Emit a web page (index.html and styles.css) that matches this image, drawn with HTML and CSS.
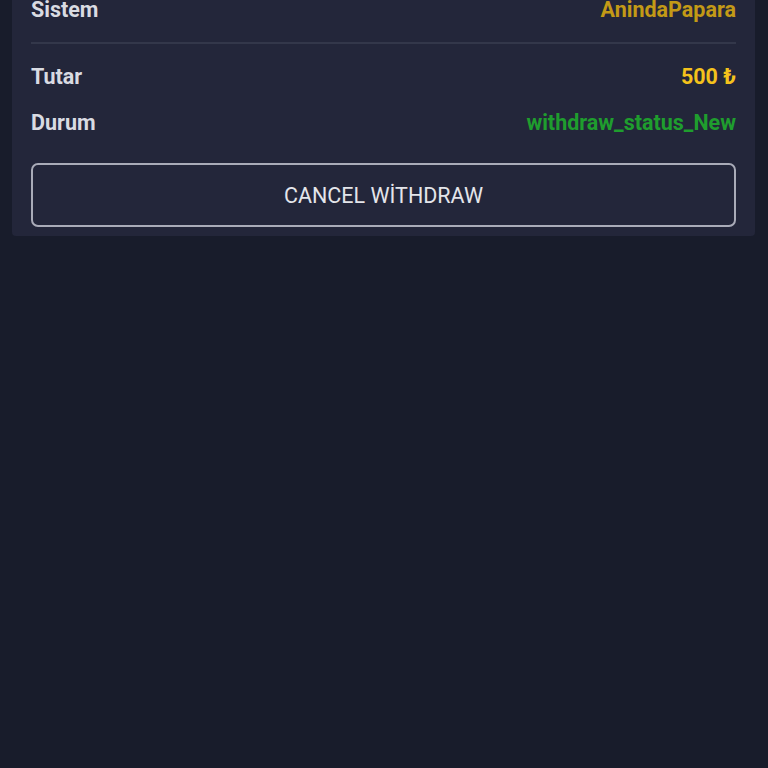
FILE: index.html
```html
<!DOCTYPE html>
<html lang="tr">
<head>
  <meta charset="UTF-8" />
  <meta name="viewport" content="width=device-width, initial-scale=1" />
  <title>Çekim Detayı</title>
  <link rel="stylesheet" href="styles.css">
</head>
<body>

  <div class="card">
    <!-- sistem -->
    <div class="row row-top">
      <span class="label">Sistem</span>
      <span class="value value-system">AnindaPapara</span>
    </div>

    <div class="divider"></div>

    <div class="row">
      <span class="label">Tutar</span>
      <span class="value value-amount">500 ₺</span>
    </div>

    <div class="row row-last">
      <span class="label">Durum</span>
      <span class="value value-status">withdraw_status_New</span>
    </div>

    <button class="btn-cancel">CANCEL WİTHDRAW</button>
  </div>

</body>
</html>
```

FILE: styles.css
```css
body {
  font-family: Roboto, "Noto Sans", sans-serif;
  background: #181c2b;
  color: #dcdde3;
  margin: 0;
  padding: 0 13px 0 12px;
}

.card {
  background: #23263a;
  margin-top: -20px;
  padding: 18px 19px 9px 19px;
  border-radius: 0 0 4px 4px;
}

.row {
  display: flex;
  justify-content: space-between;
  align-items: center;
  height: 24px;
  line-height: 24px;
  margin-bottom: 22px;
  font-size: 21.5px;
  font-weight: 700;
}

.row-top {
  margin-bottom: 0;
}

.row-last {
  margin-bottom: 28px;
}

.divider {
  height: 2px;
  background: #33374a;
  margin: 20px 0 21px;
}

.label {
  color: #d9dbe2;
}

.value-system {
  color: #c39a16;
}

.value-amount {
  color: #f4c21c;
}

.value-status {
  color: #1f9d2e;
}

.btn-cancel {
  display: block;
  width: 100%;
  height: 64px;
  background: transparent;
  border: 2px solid #a9abb8;
  border-radius: 7px;
  color: #e4e5ea;
  font-family: Roboto, "Noto Sans", sans-serif;
  font-size: 21.5px;
  font-weight: 400;
  cursor: pointer;
}
```
